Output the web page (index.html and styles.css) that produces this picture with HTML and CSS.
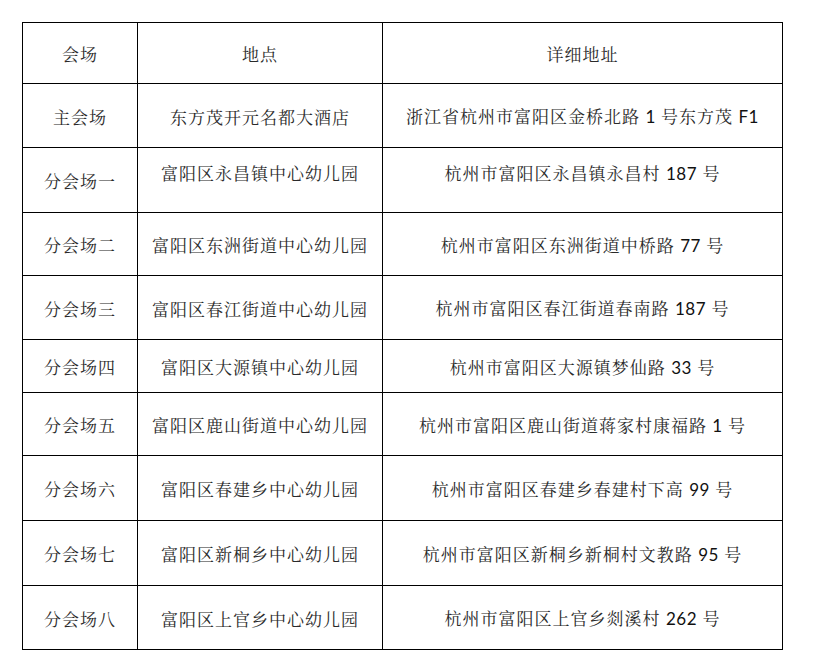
FILE: index.html
```html
<!DOCTYPE html>
<html lang="zh-CN">
<head>
<meta charset="utf-8">
<title>会场地址</title>
<link rel="stylesheet" href="styles.css">
</head>
<body>
<table class="venues">
  <colgroup>
    <col class="c1"><col class="c2"><col class="c3">
  </colgroup>
  <tr class="r-head"><td>会场</td><td>地点</td><td>详细地址</td></tr>
  <tr class="r64"><td>主会场</td><td>东方茂开元名都大酒店</td><td>浙江省杭州市富阳区金桥北路 <span class="num">1</span> 号东方茂 <span class="num">F1</span></td></tr>
  <tr class="r65"><td>分会场一</td><td class="top">富阳区永昌镇中心幼儿园</td><td class="top">杭州市富阳区永昌镇永昌村 <span class="num">187</span> 号</td></tr>
  <tr class="r63"><td>分会场二</td><td>富阳区东洲街道中心幼儿园</td><td>杭州市富阳区东洲街道中桥路 <span class="num">77</span> 号</td></tr>
  <tr class="r64"><td>分会场三</td><td>富阳区春江街道中心幼儿园</td><td>杭州市富阳区春江街道春南路 <span class="num">187</span> 号</td></tr>
  <tr class="r53"><td>分会场四</td><td>富阳区大源镇中心幼儿园</td><td>杭州市富阳区大源镇梦仙路 <span class="num">33</span> 号</td></tr>
  <tr class="r63"><td>分会场五</td><td>富阳区鹿山街道中心幼儿园</td><td>杭州市富阳区鹿山街道蒋家村康福路 <span class="num">1</span> 号</td></tr>
  <tr class="r65"><td>分会场六</td><td>富阳区春建乡中心幼儿园</td><td>杭州市富阳区春建乡春建村下高 <span class="num">99</span> 号</td></tr>
  <tr class="r65"><td>分会场七</td><td>富阳区新桐乡中心幼儿园</td><td>杭州市富阳区新桐乡新桐村文教路 <span class="num">95</span> 号</td></tr>
  <tr class="r64"><td>分会场八</td><td>富阳区上官乡中心幼儿园</td><td>杭州市富阳区上官乡剡溪村 <span class="num">262</span> 号</td></tr>
</table>
</body>
</html>
```
FILE: styles.css
```css
html, body {
  margin: 0;
  padding: 0;
  background: #ffffff;
}

body {
  padding: 22px 0 0 22px;
}

.venues {
  border-collapse: collapse;
  table-layout: fixed;
  width: 760px;
  font-family: "Noto Serif CJK SC", "Noto Sans CJK SC", sans-serif;
  font-size: 17px;
  letter-spacing: 1px;
  color: #2a2a2a;
}

.c1 { width: 115px; }
.c2 { width: 245px; }
.c3 { width: 400px; }

.venues td {
  border: 1px solid #000;
  text-align: center;
  vertical-align: middle;
  padding: 2px 0 0 0;
  line-height: 24px;
  white-space: nowrap;
}

.venues td.top {
  vertical-align: top;
  padding-top: 13px;
}

.num {
  font-family: "Lato", "Liberation Sans", sans-serif;
  letter-spacing: 0.5px;
  color: #111;
}

.r-head { height: 61px; }
.r53 { height: 53px; }
.r63 { height: 63px; }
.r64 { height: 64px; }
.r65 { height: 65px; }
```
